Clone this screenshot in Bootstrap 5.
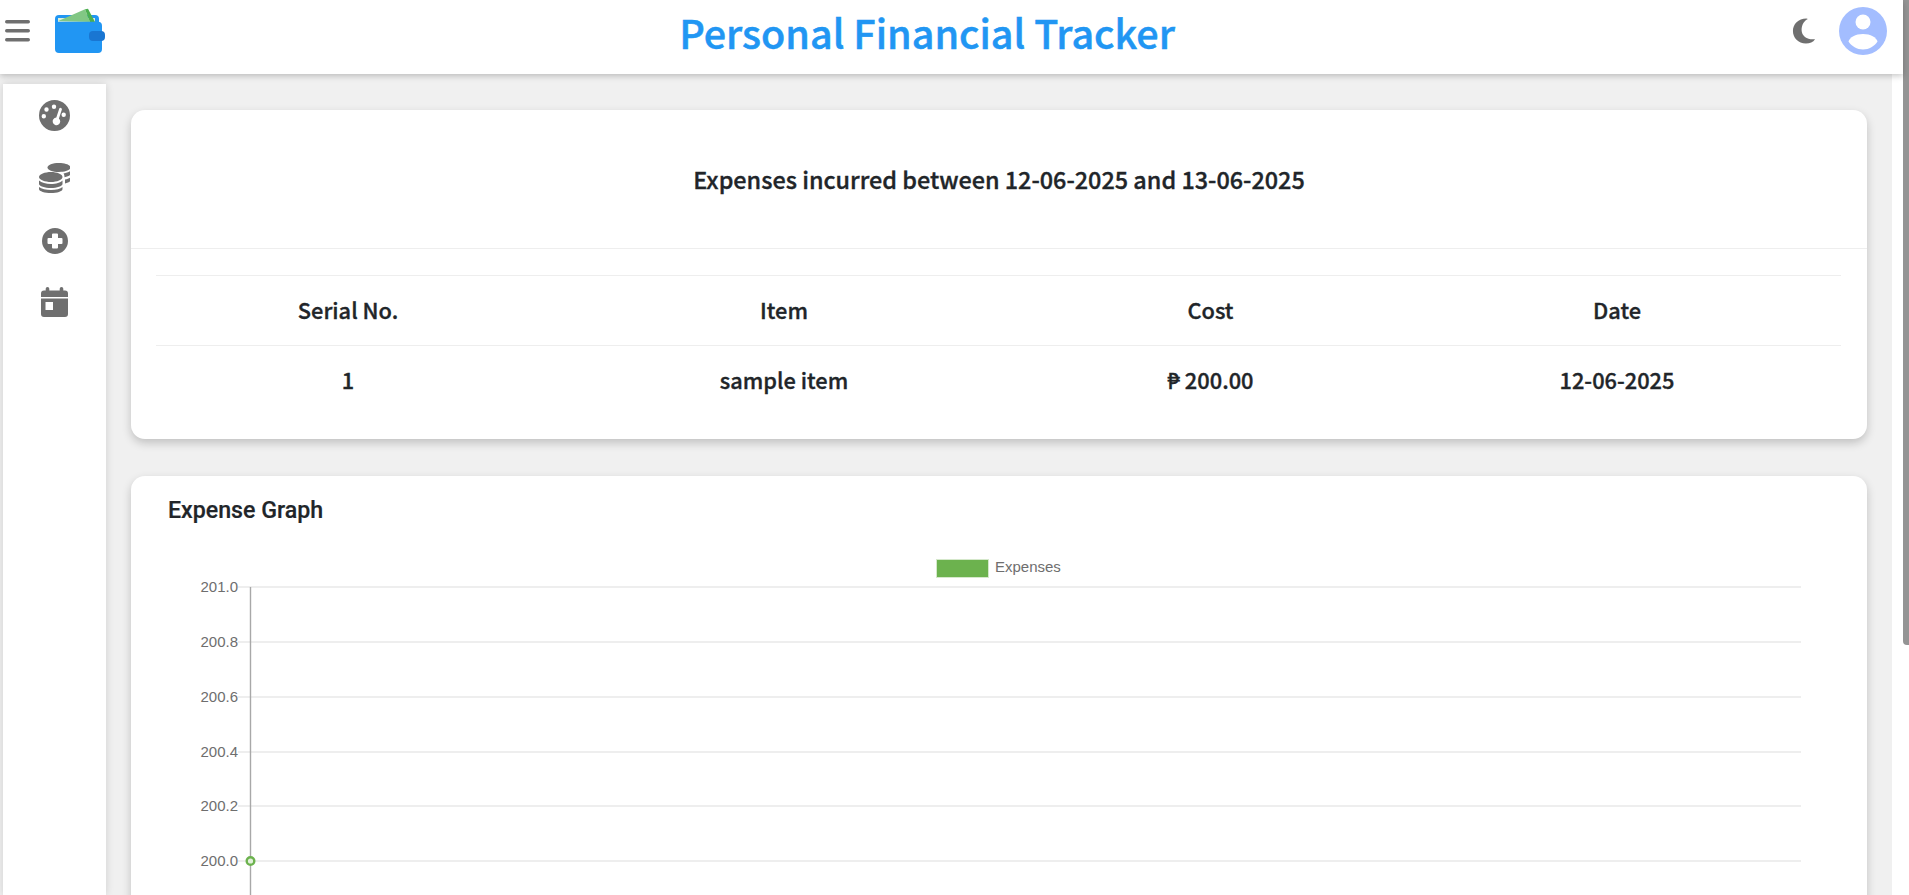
<!DOCTYPE html>
<html lang="en">
<head>
<meta charset="utf-8">
<title>Personal Financial Tracker</title>
<link rel="stylesheet" href="https://cdn.jsdelivr.net/npm/bootstrap@5.3.0/dist/css/bootstrap.min.css">
<style>
html,body{height:100%;overflow:hidden;}
body{background:#fff;font-family:"Noto Sans CJK JP","Noto Sans",sans-serif;color:#212529;}
.pf-shell{height:895px;}
.pf-page{min-width:0;}
.pf-bar{width:6px;background:#fff;}
.pf-thumb{height:645px;background:#949494;border-bottom-left-radius:4px;}
.pf-top{height:74px;flex:none;padding:0 0 12px;background:#fff;box-shadow:0 2px 6px rgba(0,0,0,.22);z-index:3;flex-wrap:nowrap;}
.pf-burger{width:25px;margin-left:5px;margin-right:25px;}
.pf-wallet{width:50px;height:46px;}
.pf-title{font-size:39.5px;font-weight:500;-webkit-text-stroke:.5px #2196f3;color:#2196f3;margin:2px 44px 0 0;line-height:1;}
.pf-moon{width:24px;height:26px;margin-right:23px;margin-left:-1px;}
.pf-avatar{width:48px;height:48px;margin-right:16px;}
.pf-body{min-height:0;background:#f0f0f0;margin-right:11px;}
.pf-side{width:103px;margin-left:3px;margin-top:10px;background:#fff;box-shadow:0 0 8px rgba(0,0,0,.14);padding-top:16px;gap:33px;}
.pf-side svg{display:block;fill:#6f6f6f;}
.pf-side .pf-coins{margin-top:-2px;margin-bottom:2px;}
.pf-main{padding:36px 25px 0 25px;gap:37px;min-width:0;}
.pf-card{border:0;border-radius:14px;box-shadow:0 4px 10px rgba(0,0,0,.2);flex:none;}
.pf-head{height:139px;padding-top:10px;background:transparent;border-bottom:1px solid #eee;font-size:23.4px;font-weight:500;-webkit-text-stroke:.35px #212529;}
.pf-tablewrap{padding:26px 27px 0 25px;height:190px;}
.pf-table{font-size:21.8px;margin:0;table-layout:fixed;}
.pf-table th,.pf-table td{height:69.5px;padding:0;vertical-align:middle;border-top:1px solid #eee;border-bottom:0;font-weight:500;-webkit-text-stroke:.35px #212529;color:#212529;}
.pf-c1{width:384px;}.pf-c2{width:488px;}.pf-c3{width:365px;}.pf-c4{width:448px;}
.pf-chartcard{height:600px;}
.pf-chart-title{font-family:Roboto,sans-serif;font-weight:500;-webkit-text-stroke:.2px #212529;font-size:23.2px;line-height:1;margin:0;padding:23px 0 0 37px;color:#212529;}
.pf-chart{display:block;position:absolute;left:0;top:0;width:1737px;height:600px;font-family:"Liberation Sans",sans-serif;font-size:15px;fill:#6e6e6e;}
.pf-grid{stroke:#dedede;stroke-width:1.2;}
.pf-axis{stroke:#a8a8a8;stroke-width:1.4;}
</style>
</head>
<body>
<div class="pf-shell d-flex">
  <div class="pf-page flex-grow-1 d-flex flex-column">
    <nav class="navbar pf-top">
      <div class="d-flex align-items-center">
        <svg class="pf-burger" viewBox="0 0 25 22" height="22" aria-hidden="true"><g fill="#6f6f6f"><rect x="0" y="0" width="25" height="3.4" rx="1.7"/><rect x="0" y="9" width="25" height="3.4" rx="1.7"/><rect x="0" y="18" width="25" height="3.4" rx="1.7"/></g></svg>
        <svg class="pf-wallet" viewBox="0 0 50 46" aria-hidden="true">
          <rect x="0" y="7" width="44" height="20" rx="4" fill="#2196f3"/>
          <rect x="3" y="10" width="37" height="6" fill="#dcefd9"/>
          <path d="M3.300 13 30 1.300l5 12.700z" fill="#81c784"/>
          <path d="M30 1.300 33 .7 40 14h-5z" fill="#4caf50"/>
          <rect x="0" y="13.700" width="47" height="31.300" rx="4" fill="#2196f3"/>
          <rect x="34" y="23" width="16" height="10" rx="4" fill="#1976d2"/>
        </svg>
      </div>
      <h1 class="pf-title flex-grow-1 text-center text-nowrap">Personal Financial Tracker</h1>
      <div class="d-flex align-items-center">
        <svg class="pf-moon" viewBox="0 0 24 27" aria-hidden="true"><path d="M14.500 .5C6 .5 .5 6.500 .5 13.500S6 26.500 14 26.500c4 0 7.500-1.400 9.500-4.500-7 1-14-2.500-14-9.500C9.500 7 12 3 16 1 15.500 .7 15 .5 14.500 .5z" fill="#6f6f6f"/></svg>
        <svg class="pf-avatar" viewBox="0 0 48 48" aria-hidden="true"><circle cx="24" cy="24" r="24" fill="#a3bdff"/><circle cx="24" cy="15" r="7.500" fill="#fff"/><path d="M24 27c7.500 0 13.500 3.500 14.500 7.500-3 4.500-8.500 8-14.500 8s-11.500-3.500-14.500-8C10.500 30.500 16.500 27 24 27z" fill="#fff"/></svg>
      </div>
    </nav>
    <div class="pf-body flex-grow-1 d-flex overflow-hidden">
      <aside class="pf-side d-flex flex-column align-items-center flex-shrink-0">
        <svg width="31" height="31" viewBox="0 0 31 31" aria-hidden="true"><path fill-rule="evenodd" d="M15.500 0a15.500 15.500 0 1 1 0 31 15.500 15.500 0 0 1 0-31zM15 4.500a2.200 2.200 0 1 0 0 4.400 2.200 2.200 0 0 0 0-4.400zM7.500 7.300a2.200 2.200 0 1 0 0 4.400 2.200 2.200 0 0 0 0-4.400zM4.800 14a2.200 2.200 0 1 0 0 4.400 2.200 2.200 0 0 0 0-4.400zM24.700 12.500a2.200 2.200 0 1 0 0 4.400 2.200 2.200 0 0 0 0-4.400zM20.300 8.600l-3 9a3.800 3.800 0 1 0 2.600 .9l3-9a1.400 1.400 0 0 0-2.600-.9z"/></svg>
        <svg class="pf-coins" width="31" height="31" viewBox="0 0 31 31" aria-hidden="true"><path d="M20 1c6.500 0 11.500 2 11.500 4.500S26.500 10 20 10 8.500 8 8.500 5.500 13.500 1 20 1z"/><path d="M24.500 11.500c3-.4 5.200-1.300 7-2.500v3c0 1.500-2.800 2.800-6 3.300 0-1.500-.2-2.800-1-3.800z"/><path d="M26 17.500c2.500-.5 4.200-1.200 5.500-2.200v3c0 1.300-2.500 2.600-5.500 3.100z"/><path d="M12 10c6 0 11.500 2.200 11.500 5S18 20 12 20 0 17.800 0 15 6 10 12 10z"/><path d="M0 18.500C2.500 20.700 7 22 12 22s9.500-1.300 11.500-3.500V22c0 2.300-5.500 4-11.500 4S0 24.300 0 22z"/><path d="M0 25c2.500 2 7 3 12 3s9.500-1 11.500-3v2c0 2.500-5.500 4-11.500 4S0 29.500 0 27z"/></svg>
        <svg width="26" height="26" viewBox="0 0 26 26" aria-hidden="true"><path fill-rule="evenodd" d="M13 0a13 13 0 1 1 0 26 13 13 0 0 1 0-26zM11 5.500a1 1 0 0 0-1 1V10H6.500a1 1 0 0 0-1 1v4a1 1 0 0 0 1 1H10v3.500a1 1 0 0 0 1 1h4a1 1 0 0 0 1-1V16h3.500a1 1 0 0 0 1-1v-4a1 1 0 0 0-1-1H16V6.500a1 1 0 0 0-1-1z"/></svg>
        <svg width="27" height="30" viewBox="0 0 27 30" aria-hidden="true"><path fill-rule="evenodd" d="M6.500 0a1.800 1.800 0 0 1 1.800 1.800V3.500h10.400V1.800a1.800 1.800 0 0 1 3.600 0V3.500H24a3 3 0 0 1 3 3V10H0V6.500a3 3 0 0 1 3-3h1.700V1.800A1.800 1.800 0 0 1 6.500 0zM0 11.500h27V27a3 3 0 0 1-3 3H3a3 3 0 0 1-3-3zM4.500 15v8h7.500v-8z"/></svg>
      </aside>
      <main class="pf-main flex-grow-1 d-flex flex-column">
        <section class="card pf-card">
          <div class="card-header pf-head d-flex align-items-center justify-content-center">Expenses incurred between 12-06-2025 and 13-06-2025</div>
          <div class="pf-tablewrap">
            <table class="table text-center pf-table">
              <thead><tr><th class="pf-c1">Serial No.</th><th class="pf-c2">Item</th><th class="pf-c3">Cost</th><th class="pf-c4">Date</th></tr></thead>
              <tbody><tr><td>1</td><td>sample item</td><td>₱ 200.00</td><td>12-06-2025</td></tr></tbody>
            </table>
          </div>
        </section>
        <section class="card pf-card pf-chartcard position-relative">
          <h2 class="pf-chart-title">Expense Graph</h2>
          <svg class="pf-chart" viewBox="0 0 1737 600" role="img" aria-label="Expense graph">
            <rect x="805.500" y="83.500" width="52" height="18" fill="#6cb24e" stroke="#d5e8cb"/>
            <text x="864" y="96">Expenses</text>
            <g class="pf-grid">
              <line x1="107" x2="1670" y1="111" y2="111"/>
              <line x1="107" x2="1670" y1="166" y2="166"/>
              <line x1="107" x2="1670" y1="221" y2="221"/>
              <line x1="107" x2="1670" y1="276" y2="276"/>
              <line x1="107" x2="1670" y1="330" y2="330"/>
              <line x1="107" x2="1670" y1="385" y2="385"/>
            </g>
            <line class="pf-axis" x1="119.500" x2="119.500" y1="111" y2="600"/>
            <g text-anchor="end">
              <text x="107" y="116">201.0</text>
              <text x="107" y="171">200.8</text>
              <text x="107" y="226">200.6</text>
              <text x="107" y="281">200.4</text>
              <text x="107" y="335">200.2</text>
              <text x="107" y="390">200.0</text>
            </g>
            <circle cx="119.500" cy="385" r="3.800" fill="#e2f0db" stroke="#6cb24e" stroke-width="2.400"/>
          </svg>
        </section>
      </main>
    </div>
  </div>
  <div class="pf-bar flex-shrink-0"><div class="pf-thumb"></div></div>
</div>
<script src="https://cdn.jsdelivr.net/npm/bootstrap@5.3.0/dist/js/bootstrap.bundle.min.js"></script>
</body>
</html>
